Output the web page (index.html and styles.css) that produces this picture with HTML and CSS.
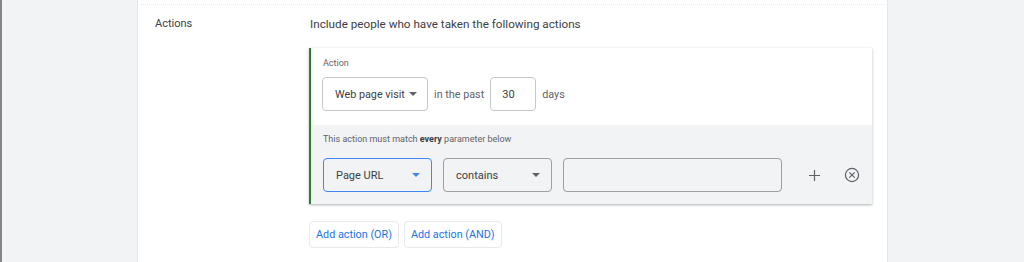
FILE: index.html
```html
<!DOCTYPE html>
<html lang="en">
<head>
    <meta charset="UTF-8">
    <title>Audience - Actions</title>
    <link rel="stylesheet" href="styles.css">
</head>
<body>
    <div class="page">
        <div class="side"></div>
        <div class="panel">
            <div class="divider"></div>
            <div class="section">
                <div class="section-label">Actions</div>
                <div class="section-body">
                    <div class="description">Include people who have taken the following actions</div>

                    <div class="action-card">
                        <div class="action-top">
                            <div class="field-label">Action</div>
                            <div class="action-row">
                                <div class="select select-visit">
                                    <span>Web page visit</span>
                                    <span class="caret"></span>
                                </div>
                                <span class="inline-text">in the past</span>
                                <div class="text-input days-input">30</div>
                                <span class="inline-text">days</span>
                            </div>
                        </div>
                        <div class="action-params">
                            <div class="params-note">This action must match <b>every</b> parameter below</div>
                            <div class="param-row">
                                <div class="select select-field focused">
                                    <span>Page URL</span>
                                    <span class="caret"></span>
                                </div>
                                <div class="select select-op">
                                    <span>contains</span>
                                    <span class="caret"></span>
                                </div>
                                <div class="text-input value-input"></div>
                                <button class="icon-btn plus-btn" aria-label="Add parameter">
                                    <svg width="13" height="13" viewBox="0 0 13 13"><path d="M6.5 1v11M1 6.5h11" stroke="#5f6368" stroke-width="1.2" fill="none"/></svg>
                                </button>
                                <button class="icon-btn remove-btn" aria-label="Remove">
                                    <svg width="16" height="16" viewBox="0 0 16 16"><circle cx="8" cy="8" r="6.6" stroke="#5f6368" stroke-width="1.2" fill="none"/><path d="M5.3 5.3l5.4 5.4M10.7 5.3l-5.4 5.4" stroke="#5f6368" stroke-width="1.2" fill="none"/></svg>
                                </button>
                            </div>
                        </div>
                    </div>

                    <div class="add-actions">
                        <button class="link-btn">Add action (OR)</button>
                        <button class="link-btn">Add action (AND)</button>
                    </div>
                </div>
            </div>
        </div>
    </div>
</body>
</html>
```

FILE: styles.css
```css
* {
    margin: 0;
    padding: 0;
    box-sizing: border-box;
}

body {
    font-family: Roboto, 'Liberation Sans', Arial, sans-serif;
    background: #f1f3f4;
    color: #3c4043;
    font-size: 11.7px;
    height: 262px;
    overflow: hidden;
}

.page {
    display: flex;
    height: 262px;
    border-left: 2px solid #80868b;
}

.side {
    width: 135px;
    flex-shrink: 0;
}

.panel {
    width: 751px;
    flex-shrink: 0;
    background: #fff;
    border-left: 1px solid #e3e5e8;
    border-right: 1px solid #e3e5e8;
}

.divider {
    height: 5px;
    margin: 0 3px 0 3px;
    border-bottom: 1px dotted #e6e8eb;
}

.section {
    display: flex;
    padding: 11px 0 0 17px;
}

.section-label {
    width: 154px;
    flex-shrink: 0;
    font-size: 11px;
    line-height: 16px;
}

.section-body {
    display: flex;
    flex-direction: column;
}

.description {
    line-height: 16px;
    margin-bottom: 16px;
    padding-left: 1px;
}

.action-card {
    width: 563px;
    border-left: 2px solid #2e7d32;
    box-shadow: 0 1px 3px rgba(60, 64, 67, 0.3), 0 1px 1px rgba(60, 64, 67, 0.1);
    background: #fff;
}

.action-top {
    padding: 9px 12px 14px 11px;
}

.field-label {
    font-size: 9px;
    color: #5f6368;
    line-height: 12px;
    margin-bottom: 8px;
    padding-left: 1px;
}

.action-row,
.param-row {
    display: flex;
    align-items: center;
}

.select {
    height: 34px;
    border: 1px solid #9aa0a6;
    border-radius: 4px;
    display: flex;
    align-items: center;
    justify-content: space-between;
    padding: 0 11px 0 12px;
    font-size: 11px;
    color: #3c4043;
    white-space: nowrap;
}

.caret {
    width: 0;
    height: 0;
    border-left: 4px solid transparent;
    border-right: 4px solid transparent;
    border-top: 4px solid #5f6368;
}

.select-visit {
    width: 106px;
    background: #fff;
    border-color: #c4c7ca;
    padding: 0 10px 0 12px;
    font-size: 10.8px;
}

.inline-text {
    margin: 0 6px;
    font-size: 10.8px;
    color: #5f6368;
}

.text-input {
    height: 34px;
    border: 1px solid #c4c7ca;
    border-radius: 4px;
    display: flex;
    align-items: center;
    padding: 0 11px;
    font-size: 11px;
}

.days-input {
    width: 46px;
    background: #fff;
}

.action-params {
    background: #f1f3f4;
    padding: 8px 12px 12px 12px;
}

.params-note {
    font-size: 9px;
    color: #5f6368;
    line-height: 13px;
    margin-bottom: 12px;
}

.params-note b {
    color: #3c4043;
    font-weight: 700;
}

.select-field {
    width: 110px;
}

.select-field.focused {
    border-color: #4285f4;
}

.select-field.focused .caret {
    border-top-color: #4285f4;
}

.select-op {
    width: 110px;
    margin-left: 11px;
}

.value-input {
    width: 221px;
    margin-left: 11px;
    border-color: #9aa0a6;
}

.icon-btn {
    background: none;
    border: none;
    display: flex;
    align-items: center;
    justify-content: center;
}

.plus-btn {
    margin-left: 26px;
}

.remove-btn {
    margin-left: 23px;
}

.add-actions {
    display: flex;
    gap: 5px;
    margin-top: 17px;
}

.link-btn {
    height: 27px;
    padding: 0 6px;
    border: 1px solid #e8eaed;
    border-radius: 4px;
    background: #fff;
    color: #1a73e8;
    font-family: inherit;
    font-size: 10.8px;
    font-weight: 400;
}
```
